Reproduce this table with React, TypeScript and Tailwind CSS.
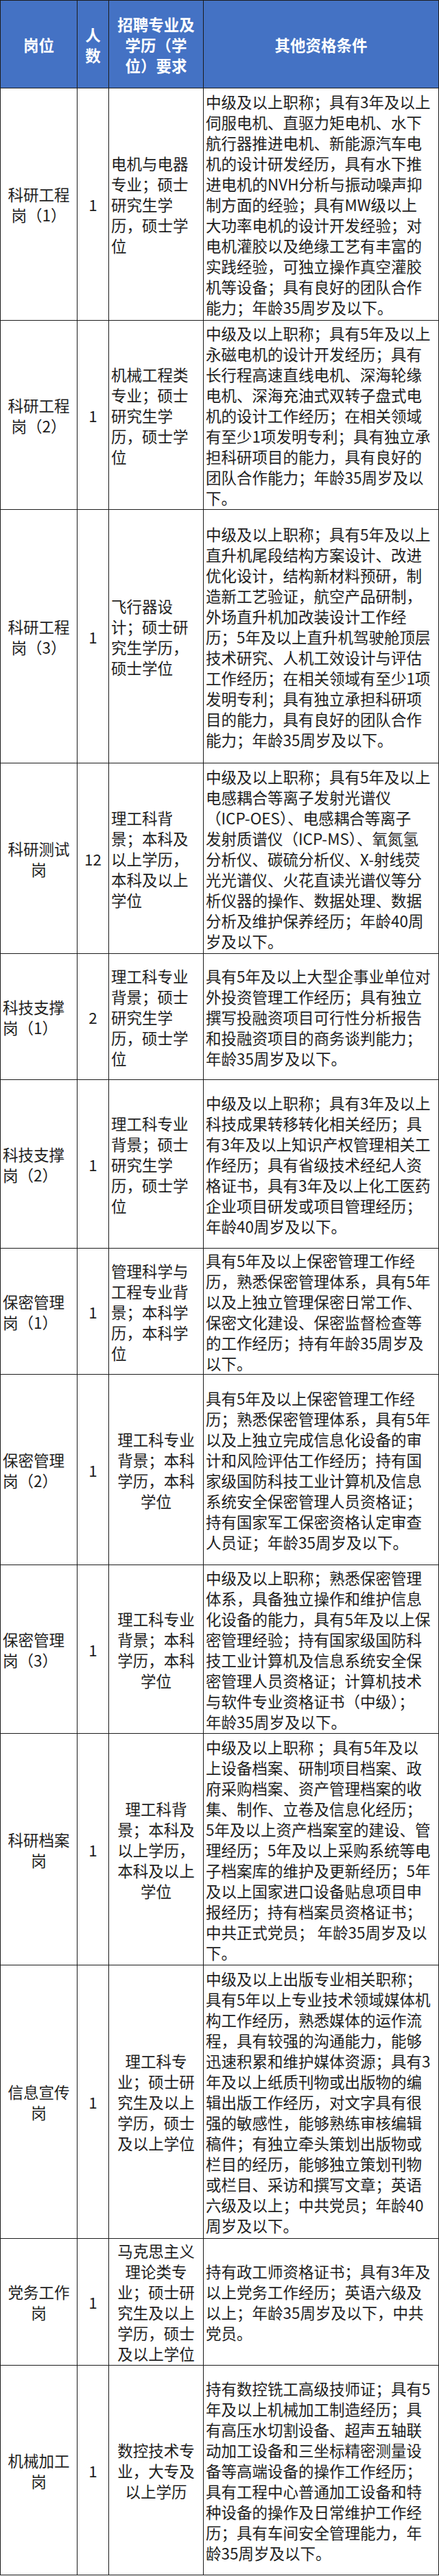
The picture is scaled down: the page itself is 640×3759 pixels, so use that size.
import React from 'react';

type Align = 'left' | 'center';

interface JobRow {
  height: number;
  title: string[];
  titleAlign: Align;
  count: string;
  major: string[];
  majorAlign: Align;
  conditions: string[];
}

const rows: JobRow[] = [
  {
    height: 339,
    title: ['科研工程', '岗（1）'],
    titleAlign: 'center',
    count: '1',
    major: ['电机与电器', '专业；硕士', '研究生学', '历，硕士学', '位'],
    majorAlign: 'left',
    conditions: [
      '中级及以上职称；具有3年及以上',
      '伺服电机、直驱力矩电机、水下',
      '航行器推进电机、新能源汽车电',
      '机的设计研发经历，具有水下推',
      '进电机的NVH分析与振动噪声抑',
      '制方面的经验；具有MW级以上',
      '大功率电机的设计开发经验；对',
      '电机灌胶以及绝缘工艺有丰富的',
      '实践经验，可独立操作真空灌胶',
      '机等设备；具有良好的团队合作',
      '能力；年龄35周岁及以下。',
    ],
  },
  {
    height: 276,
    title: ['科研工程', '岗（2）'],
    titleAlign: 'center',
    count: '1',
    major: ['机械工程类', '专业；硕士', '研究生学', '历，硕士学', '位'],
    majorAlign: 'left',
    conditions: [
      '中级及以上职称；具有5年及以上',
      '永磁电机的设计开发经历；具有',
      '长行程高速直线电机、深海轮缘',
      '电机、深海充油式双转子盘式电',
      '机的设计工作经历；在相关领域',
      '有至少1项发明专利；具有独立承',
      '担科研项目的能力，具有良好的',
      '团队合作能力；年龄35周岁及以',
      '下。',
    ],
  },
  {
    height: 370,
    title: ['科研工程', '岗（3）'],
    titleAlign: 'center',
    count: '1',
    major: ['飞行器设', '计；硕士研', '究生学历，', '硕士学位'],
    majorAlign: 'left',
    conditions: [
      '中级及以上职称；具有5年及以上',
      '直升机尾段结构方案设计、改进',
      '优化设计，结构新材料预研，制',
      '造新工艺验证，航空产品研制，',
      '外场直升机加改装设计工作经',
      '历；5年及以上直升机驾驶舱顶层',
      '技术研究、人机工效设计与评估',
      '工作经历；在相关领域有至少1项',
      '发明专利；具有独立承担科研项',
      '目的能力，具有良好的团队合作',
      '能力；年龄35周岁及以下。',
    ],
  },
  {
    height: 278,
    title: ['科研测试', '岗'],
    titleAlign: 'center',
    count: '12',
    major: ['理工科背', '景；本科及', '以上学历，', '本科及以上', '学位'],
    majorAlign: 'left',
    conditions: [
      '中级及以上职称；具有5年及以上',
      '电感耦合等离子发射光谱仪',
      '（ICP-OES）、电感耦合等离子',
      '发射质谱仪（ICP-MS）、氧氮氢',
      '分析仪、碳硫分析仪、X-射线荧',
      '光光谱仪、火花直读光谱仪等分',
      '析仪器的操作、数据处理、数据',
      '分析及维护保养经历；年龄40周',
      '岁及以下。',
    ],
  },
  {
    height: 184,
    title: ['科技支撑', '岗（1）'],
    titleAlign: 'left',
    count: '2',
    major: ['理工科专业', '背景；硕士', '研究生学', '历，硕士学', '位'],
    majorAlign: 'left',
    conditions: [
      '具有5年及以上大型企事业单位对',
      '外投资管理工作经历；具有独立',
      '撰写投融资项目可行性分析报告',
      '和投融资项目的商务谈判能力；',
      '年龄35周岁及以下。',
    ],
  },
  {
    height: 246,
    title: ['科技支撑', '岗（2）'],
    titleAlign: 'left',
    count: '1',
    major: ['理工科专业', '背景；硕士', '研究生学', '历，硕士学', '位'],
    majorAlign: 'left',
    conditions: [
      '中级及以上职称；具有3年及以上',
      '科技成果转移转化相关经历；具',
      '有3年及以上知识产权管理相关工',
      '作经历；具有省级技术经纪人资',
      '格证书，具有3年及以上化工医药',
      '企业项目研发或项目管理经历；',
      '年龄40周岁及以下。',
    ],
  },
  {
    height: 184,
    title: ['保密管理', '岗（1）'],
    titleAlign: 'left',
    count: '1',
    major: ['管理科学与', '工程专业背', '景；本科学', '历，本科学', '位'],
    majorAlign: 'left',
    conditions: [
      '具有5年及以上保密管理工作经',
      '历，熟悉保密管理体系，具有5年',
      '以及上独立管理保密日常工作、',
      '保密文化建设、保密监督检查等',
      '的工作经历；持有年龄35周岁及',
      '以下。',
    ],
  },
  {
    height: 278,
    title: ['保密管理', '岗（2）'],
    titleAlign: 'left',
    count: '1',
    major: ['理工科专业', '背景；本科', '学历，本科', '学位'],
    majorAlign: 'center',
    conditions: [
      '具有5年及以上保密管理工作经',
      '历；熟悉保密管理体系，具有5年',
      '以及上独立完成信息化设备的审',
      '计和风险评估工作经历；持有国',
      '家级国防科技工业计算机及信息',
      '系统安全保密管理人员资格证；',
      '持有国家军工保密资格认定审查',
      '人员证；年龄35周岁及以下。',
    ],
  },
  {
    height: 246,
    title: ['保密管理', '岗（3）'],
    titleAlign: 'left',
    count: '1',
    major: ['理工科专业', '背景；本科', '学历，本科', '学位'],
    majorAlign: 'center',
    conditions: [
      '中级及以上职称；熟悉保密管理',
      '体系，具备独立操作和维护信息',
      '化设备的能力，具有5年及以上保',
      '密管理经验；持有国家级国防科',
      '技工业计算机及信息系统安全保',
      '密管理人员资格证；计算机技术',
      '与软件专业资格证书（中级）；',
      '年龄35周岁及以下。',
    ],
  },
  {
    height: 338,
    title: ['科研档案', '岗'],
    titleAlign: 'center',
    count: '1',
    major: ['理工科背', '景；本科及', '以上学历，', '本科及以上', '学位'],
    majorAlign: 'center',
    conditions: [
      '中级及以上职称 ；具有5年及以',
      '上设备档案、研制项目档案、政',
      '府采购档案、资产管理档案的收',
      '集、制作、立卷及信息化经历；',
      '5年及以上资产档案室的建设、管',
      '理经历；5年及以上采购系统等电',
      '子档案库的维护及更新经历；5年',
      '及以上国家进口设备贴息项目申',
      '报经历；持有档案员资格证书；',
      '中共正式党员； 年龄35周岁及以',
      '下。',
    ],
  },
  {
    height: 399,
    title: ['信息宣传', '岗'],
    titleAlign: 'center',
    count: '1',
    major: ['理工科专', '业；硕士研', '究生及以上', '学历，硕士', '及以上学位'],
    majorAlign: 'center',
    conditions: [
      '中级及以上出版专业相关职称；',
      '具有5年以上专业技术领域媒体机',
      '构工作经历，熟悉媒体的运作流',
      '程，具有较强的沟通能力，能够',
      '迅速积累和维护媒体资源；具有3',
      '年及以上纸质刊物或出版物的编',
      '辑出版工作经历，对文字具有很',
      '强的敏感性，能够熟练审核编辑',
      '稿件；有独立牵头策划出版物或',
      '栏目的经历，能够独立策划刊物',
      '或栏目、采访和撰写文章；英语',
      '六级及以上；中共党员；年龄40',
      '周岁及以下。',
    ],
  },
  {
    height: 185,
    title: ['党务工作', '岗'],
    titleAlign: 'center',
    count: '1',
    major: ['马克思主义', '理论类专', '业；硕士研', '究生及以上', '学历，硕士', '及以上学位'],
    majorAlign: 'center',
    conditions: [
      '持有政工师资格证书；具有3年及',
      '以上党务工作经历；英语六级及',
      '以上；年龄35周岁及以下，中共',
      '党员。',
    ],
  },
  {
    height: 306,
    title: ['机械加工', '岗'],
    titleAlign: 'center',
    count: '1',
    major: ['数控技术专', '业，大专及', '以上学历'],
    majorAlign: 'center',
    conditions: [
      '持有数控铣工高级技师证；具有5',
      '年及以上机械加工制造经历；具',
      '有高压水切割设备、超声五轴联',
      '动加工设备和三坐标精密测量设',
      '备等高端设备的操作工作经历；',
      '具有工程中心普通加工设备和特',
      '种设备的操作及日常维护工作经',
      '历；具有车间安全管理能力，年',
      '龄35周岁及以下。',
    ],
  },
];

function Lines({ lines, align }: { lines: string[]; align: Align }) {
  return (
    <div className={align === 'center' ? 'text-center' : 'text-left'}>
      {lines.map((line, i) => (
        <div key={i} className="whitespace-nowrap">
          {line}
        </div>
      ))}
    </div>
  );
}

export default function App() {
  const cell = 'flex flex-col justify-center border-r border-b border-[#1c1c1c] overflow-hidden';

  return (
    <div className="w-[640px] bg-white font-['Noto_Sans_CJK_SC','Noto_Sans',sans-serif] text-[22.5px] leading-[30px] text-[#1e1e1e]">
      <div className="border-l border-t border-[#1c1c1c]">
        {/* header */}
        <div className="grid h-[128px] grid-cols-[112px_46px_138px_343px] bg-[#4472c4] font-bold text-white">
          <div className={`${cell} items-center`}>岗位</div>
          <div className={`${cell} items-center`}>
            <Lines lines={['人', '数']} align="center" />
          </div>
          <div className={`${cell} items-center`}>
            <Lines lines={['招聘专业及', '学历（学', '位）要求']} align="center" />
          </div>
          <div className={`${cell} items-center`}>其他资格条件</div>
        </div>

        {rows.map((row, i) => (
          <div
            key={i}
            className="grid grid-cols-[112px_46px_138px_343px]"
            style={{ height: row.height }}
          >
            <div className={`${cell} ${row.titleAlign === 'center' ? 'items-center' : 'items-start pl-[3px]'}`}>
              <Lines lines={row.title} align={row.titleAlign} />
            </div>
            <div className={`${cell} items-center`}>{row.count}</div>
            <div className={`${cell} ${row.majorAlign === 'center' ? 'items-center' : 'items-start pl-[3px]'}`}>
              <Lines lines={row.major} align={row.majorAlign} />
            </div>
            <div className={`${cell} items-start pl-[3px]`}>
              <Lines lines={row.conditions} align="left" />
            </div>
          </div>
        ))}
      </div>
    </div>
  );
}
